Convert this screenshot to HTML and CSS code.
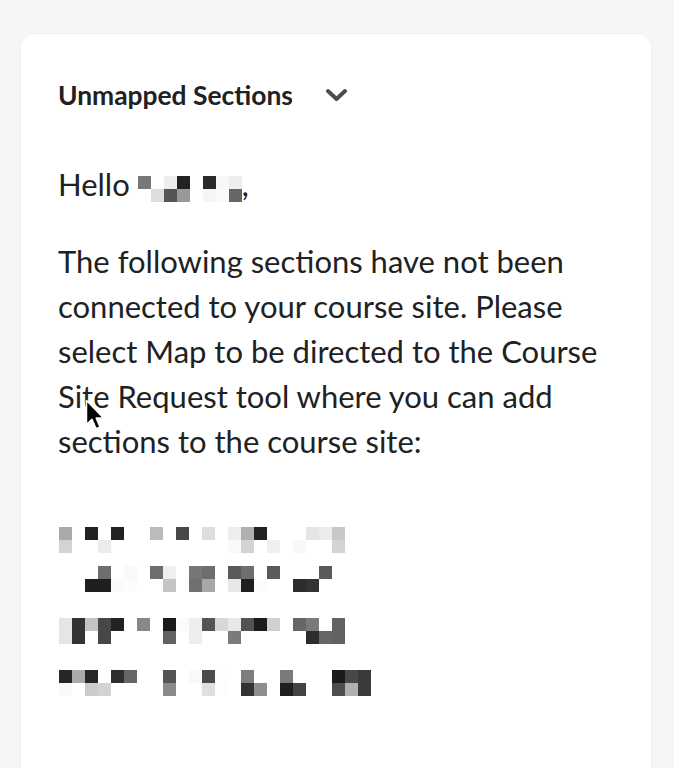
FILE: index.html
```html
<!DOCTYPE html>
<html lang="en">
<head>
    <meta charset="UTF-8">
    <meta name="viewport" content="width=device-width, initial-scale=1.0">
    <title>Unmapped Sections</title>
    <link rel="stylesheet" href="styles.css">
</head>
<body>
    <div class="card">
        <div class="card-header">
            <h2 class="card-title">Unmapped Sections</h2>
            <svg class="chevron" width="23" height="14" viewBox="0 0 23 14">
                <path d="M3 3 L11.5 11 L20 3" fill="none" stroke="#494c4e" stroke-width="4" stroke-linecap="round" stroke-linejoin="round"/>
            </svg>
        </div>
        <p class="greeting">Hello <span class="pixels pixels-name" data-rows="77 - ee 22 - 2a f8 ee|- dd 55 99 - f5 fa 66"></span>,</p>
        <p class="message">The following sections have not been connected to your course site. Please select Map to be directed to the Course Site Request tool where you can add sections to the course site:</p>
        <div class="sections">
            <div class="pixels section-row row-1" data-rows="aa - 22 - 22 - - bb - 48 - dd - ee b0 22 - - - e5 eb c8|d3 - - ec - - - - - - - - - f9 d3 - f0 - f8 - - d3"></div>
            <div class="pixels section-row row-2" data-rows="- - - 6e - f9 - 6e ef - 77 6e - 5a 6e - 5a - - - 5a|- - 1f 1f fa fc - - c4 - 70 a8 - e8 1f fc - - 2c 33"></div>
            <div class="pixels section-row row-3" data-rows="e5 33 c4 47 22 - 88 - 19 fc ee 54 d8 e8 53 1c d0 - 66 7a - 62|e5 33 - 47 - - - - 62 - ee - - 7b - - - - - 2c 66 62"></div>
            <div class="pixels section-row row-4" data-rows="27 aa 26 - 2e 66 - - 54 - f9 4b fe - 7d - - 7a - - - 1b 48 3a|fa - cc d3 - - - - 8a - - df fd - 33 8e - 1f 44 - - 4e b0 3a"></div>
        </div>
    </div>

    <svg class="cursor" width="21" height="32" viewBox="0 0 21 32">
        <path d="M1.5 1.5 L1.5 25.5 L7 20.4 L11 29.6 L15 27.9 L11.2 19.1 L18.5 18.9 Z" fill="#000" stroke="#fff" stroke-width="1.5" stroke-linejoin="round"/>
    </svg>

    <script>
        // blurred names: each cell is a grey level, "-" is blank
        document.querySelectorAll('.pixels').forEach(function (box) {
            box.getAttribute('data-rows').split('|').forEach(function (line) {
                var row = document.createElement('span');
                row.className = 'pixel-line';
                line.split(' ').forEach(function (v) {
                    var cell = document.createElement('span');
                    cell.className = 'pixel';
                    if (v !== '-') cell.style.background = '#' + v + v + v;
                    row.appendChild(cell);
                });
                box.appendChild(row);
            });
        });
    </script>
</body>
</html>
```

FILE: styles.css
```css
body {
    margin: 0;
    padding: 34px 23px 0 21px;
    background-color: #f5f6f8;
    font-family: Lato, "Open Sans", sans-serif;
    color: #202122;
    height: 768px;
    box-sizing: border-box;
    overflow: hidden;
}
.card {
    background: #fff;
    border-radius: 14px;
    box-shadow: 0 0 0 1px #eff0f2;
    padding: 38px 37px 0 37px;
    height: 800px;
}
.card-header {
    display: flex;
    align-items: center;
    height: 46px;
}
.card-title {
    margin: 0;
    font-size: 26.4px;
    font-weight: 700;
    line-height: 46px;
}
.chevron {
    margin-left: 32px;
    margin-top: -1px;
}
.greeting,
.message {
    margin: 0;
    font-size: 31px;
    line-height: 45px;
}
.greeting {
    margin-top: 44px;
}
.message {
    margin-top: 32px;
}
.pixels {
    display: flex;
    flex-direction: column;
}
.pixels-name {
    display: inline-block;
    vertical-align: -6px;
}
.pixel-line {
    display: flex;
}
.pixel {
    width: 13px;
    height: 13px;
}
.sections {
    display: flex;
    flex-direction: column;
    margin-top: 63px;
}
.section-row {
    margin-left: 1px;
}
.row-2 {
    margin-top: 13px;
}
.row-3,
.row-4 {
    margin-top: 26px;
}
.cursor {
    position: absolute;
    left: 85px;
    top: 399px;
}
```
